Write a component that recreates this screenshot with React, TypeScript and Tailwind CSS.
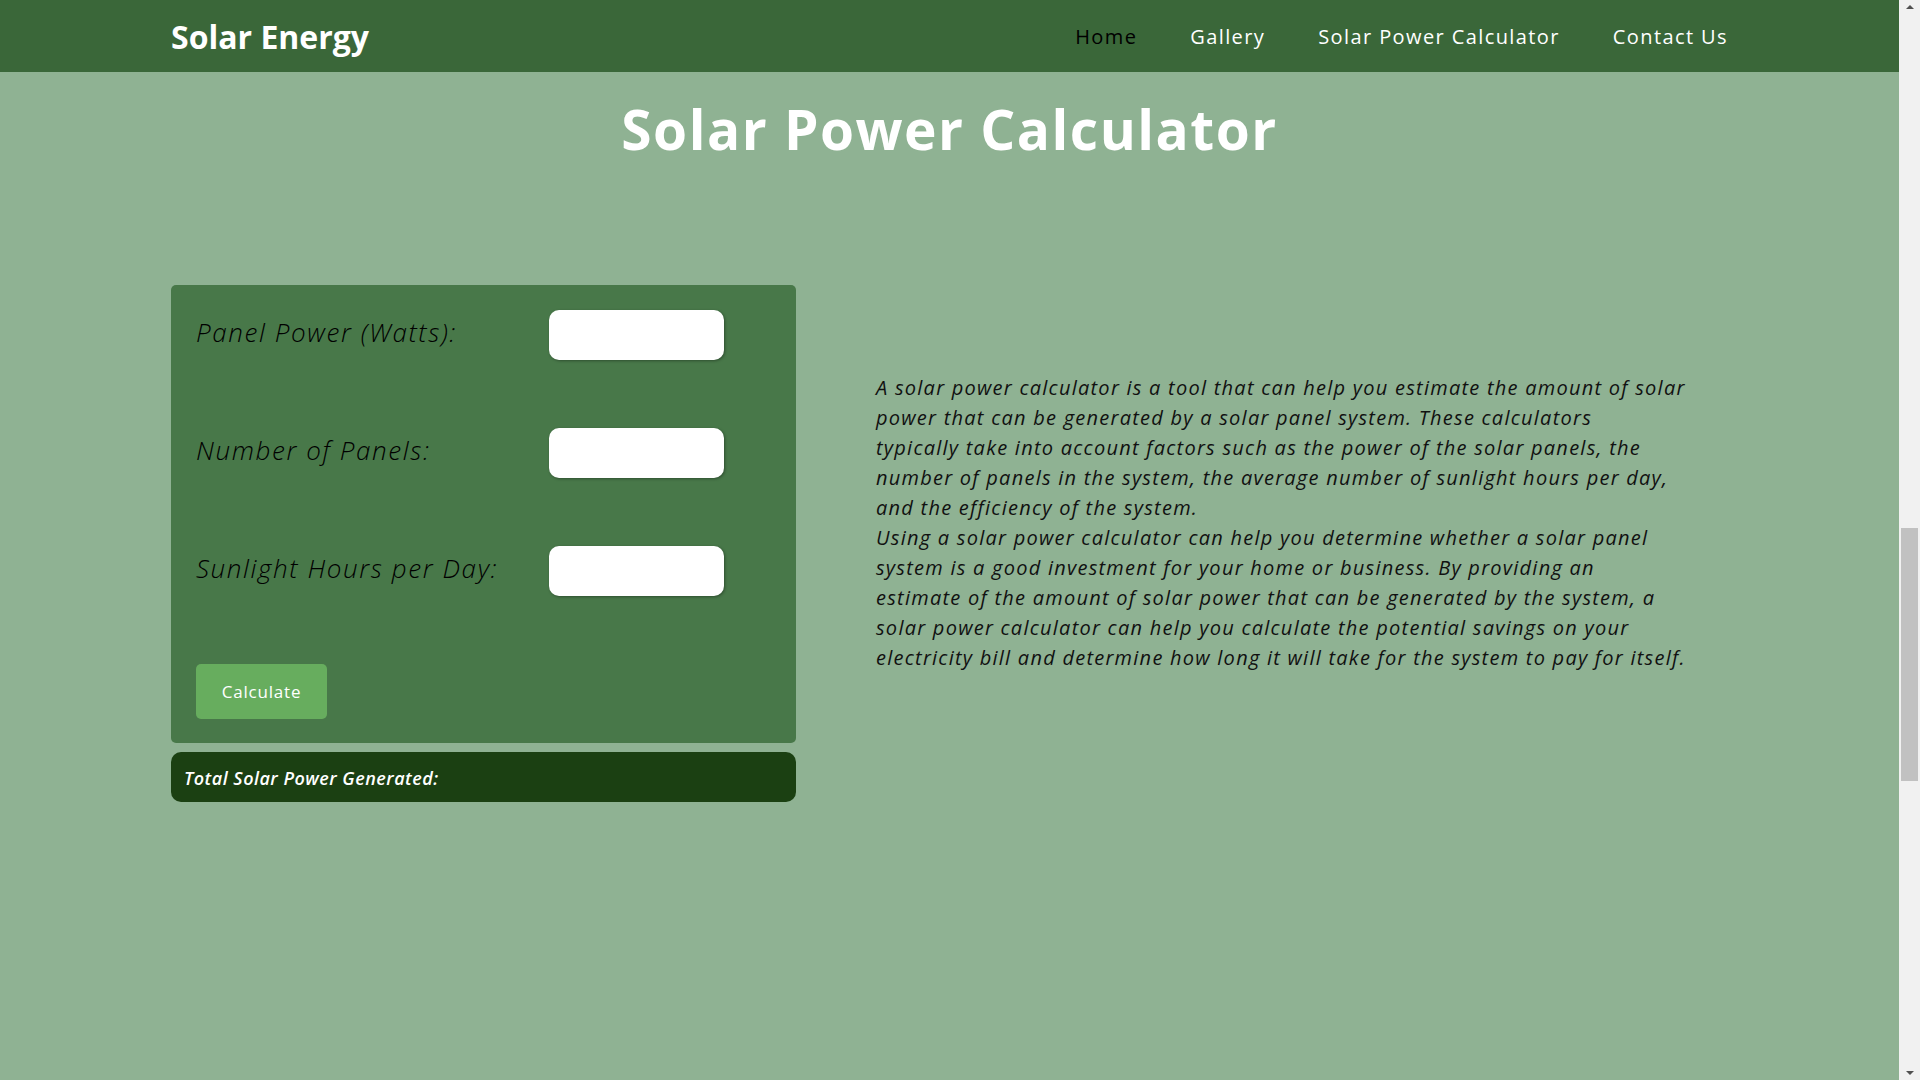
import React from 'react';

const navLinks = [
  { label: 'Home', active: true },
  { label: 'Gallery', active: false },
  { label: 'Solar Power Calculator', active: false },
  { label: 'Contact Us', active: false },
];

const fields = ['Panel Power (Watts):', 'Number of Panels:', 'Sunlight Hours per Day:'];

const aboutLines = [
  'A solar power calculator is a tool that can help you estimate the amount of solar',
  'power that can be generated by a solar panel system. These calculators',
  'typically take into account factors such as the power of the solar panels, the',
  'number of panels in the system, the average number of sunlight hours per day,',
  'and the efficiency of the system.',
  'Using a solar power calculator can help you determine whether a solar panel',
  'system is a good investment for your home or business. By providing an',
  'estimate of the amount of solar power that can be generated by the system, a',
  'solar power calculator can help you calculate the potential savings on your',
  'electricity bill and determine how long it will take for the system to pay for itself.',
];

function Scrollbar() {
  return (
    <div className="w-[21px] h-screen bg-[#f1f1f1] flex flex-col items-center justify-between py-[5px]">
      <div className="w-0 h-0 border-l-[4px] border-r-[4px] border-b-[4px] border-l-transparent border-r-transparent border-b-[#505050]" />
      <div className="flex-1 w-full flex flex-col pt-[519px] pb-[290px] px-[2px]">
        <div className="flex-1 bg-[#c1c1c1]" />
      </div>
      <div className="w-0 h-0 border-l-[4px] border-r-[4px] border-t-[4px] border-l-transparent border-r-transparent border-t-[#505050]" />
    </div>
  );
}

export default function App() {
  return (
    <div className="flex h-screen overflow-hidden bg-[#8fb293] font-['Open_Sans',sans-serif]">
      <div className="flex-1 flex flex-col">
        <header className="h-[72px] bg-[#3a6739] flex items-center justify-between px-[171px]">
          <h2 className="pt-[2px] text-[32px] font-bold text-white tracking-[0px]">Solar Energy</h2>
          <nav className="flex items-center gap-[53px] pt-[2px]">
            {navLinks.map((link) => (
              <a
                key={link.label}
                href="#"
                className={
                  link.active
                    ? 'text-[20px] tracking-[1.4px] text-black'
                    : 'text-[20px] tracking-[1.4px] text-white'
                }
              >
                {link.label}
              </a>
            ))}
          </nav>
        </header>

        <h1 className="mt-[22px] text-center text-[55px] leading-[70px] font-bold text-white tracking-[1.5px]">
          Solar Power Calculator
        </h1>

        <section className="mt-[121px] flex items-start px-[171px]">
          <div className="w-[625px] flex flex-col">
            <div className="bg-[#487849] rounded-[5px] px-[25px] pt-[25px] pb-[24px] flex flex-col gap-[68px]">
              {fields.map((label) => (
                <div key={label} className="flex items-center">
                  <label className="w-[353px] pb-[6px] text-[26px] tracking-[1.6px] italic font-light text-black">
                    {label}
                  </label>
                  <input
                    type="text"
                    className="w-[175px] h-[50px] rounded-[10px] bg-white shadow-[1px_1px_3px_rgba(0,0,0,0.35)] outline-none"
                  />
                </div>
              ))}
              <button className="w-[131px] h-[55px] rounded-[5px] bg-[#67ad5e] text-white text-[17px] tracking-[0.8px]">
                Calculate
              </button>
            </div>
            <div className="mt-[9px] h-[50px] rounded-[10px] bg-[#1b4012] flex items-center px-[13px]">
              <span className="pt-[2px] text-[18px] tracking-[0.5px] italic font-semibold text-white">
                Total Solar Power Generated:
              </span>
            </div>
          </div>

          <div className="ml-[80px] mt-[88px] flex flex-col text-[20px] leading-[30px] tracking-[1.25px] italic text-[#111]">
            {aboutLines.map((line) => (
              <span key={line} className="whitespace-nowrap">
                {line}
              </span>
            ))}
          </div>
        </section>
      </div>
      <Scrollbar />
    </div>
  );
}
